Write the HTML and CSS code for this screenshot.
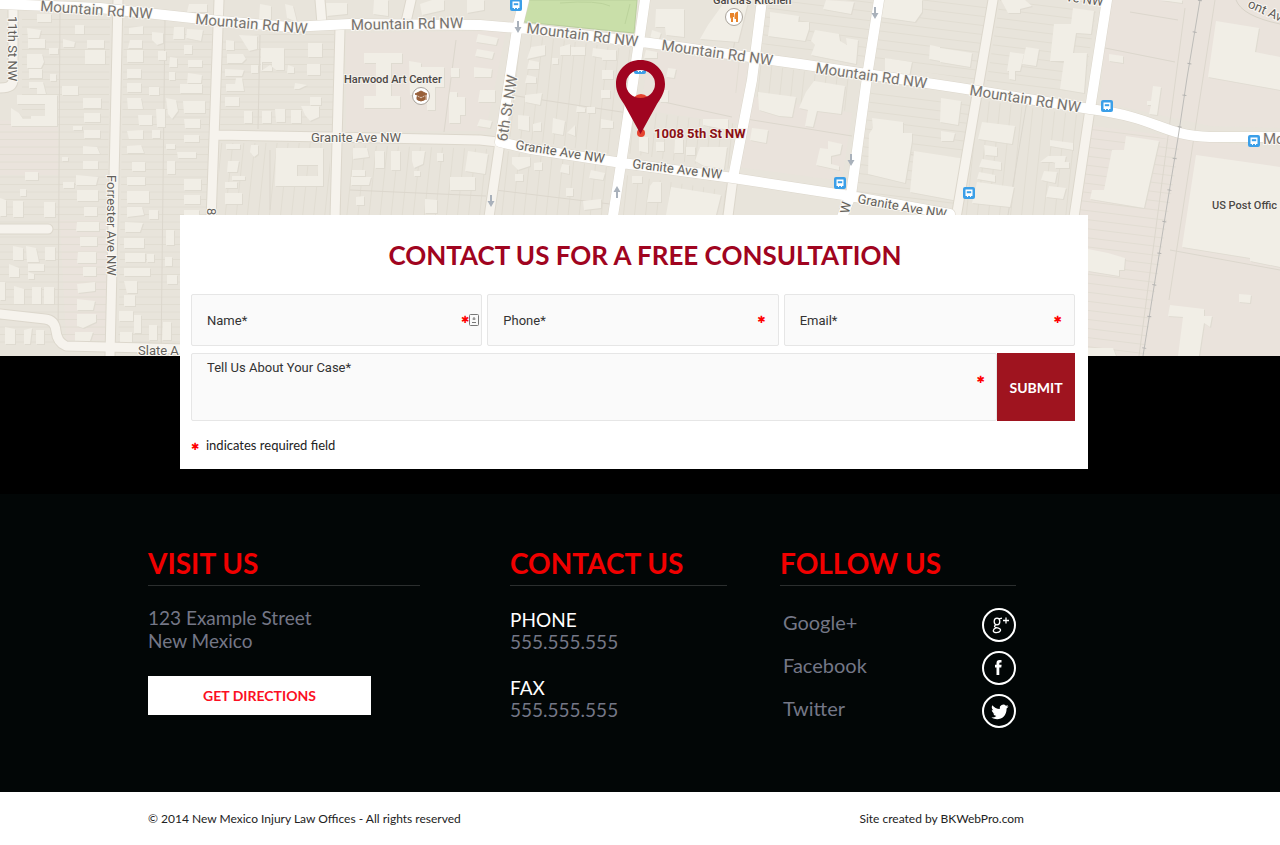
FILE: index.html
```html
<!DOCTYPE html>
<html lang="en">
<head>
<meta charset="utf-8">
<meta name="viewport" content="width=device-width, initial-scale=1">
<title>Contact - New Mexico Injury Law Offices</title>
<link rel="stylesheet" href="styles.css">
</head>
<body>
<section class="map" aria-label="Map of 1008 5th St NW">
<svg class="map-canvas" viewBox="0 0 1280 356" preserveAspectRatio="xMidYMin slice">
  <defs>
    <pattern id="rows" width="60" height="15" patternUnits="userSpaceOnUse"><path class="lot" d="M0 4.500H60M0 12H60"/></pattern>
    <pattern id="cols" width="11" height="60" patternUnits="userSpaceOnUse" patternTransform="rotate(6)"><path class="lot" d="M4.500 0V60"/></pattern>
    <pattern id="slant" width="60" height="9" patternUnits="userSpaceOnUse" patternTransform="rotate(7)"><path class="lot" d="M0 4.500H60"/></pattern>
    <g id="bus"><rect class="bus-box" x="-6" y="-6" width="12" height="12" rx="2"/><path class="bus-body" d="M-3.500-3.500h7v6.500h-1.500v1h-1v-1h-2v1h-1v-1h-1.500z"/><path class="bus-glass" d="M-2.200-1.800h4.400v2h-4.400z"/></g>
    <path id="arrow" class="arrow" d="M-1-6h2v6h2.500L0 6-3.500 0H-1z"/>
  </defs>
  <rect class="land" width="1280" height="356"/>
  <path class="tint" d="M346 33l160-2-20 100-140 0zM650 50l98 14-8 60-100-14zM740 95l112 18-10 68-105-14zM1108 0h172v128l-70-2-110-24zM1085 125l195 25v206H1070zM0 120l58 5v50H0zM60 220h48v120H66z"/>
  <path fill="url(#rows)" d="M22 18h88l-4 325H0V120h22zM124 22l88 8-8 326h-86zM222 36l112-4v98H220z"/>
  <path fill="url(#cols)" d="M518 34l116 16-14 106-114-20zM345 145l150 4-12 66H342zM220 143h110v72H217zM735 60l122 20-4 32-123-20zM630 110l108 14-8 45-105-16zM500 150l114 18-6 47H490zM980 100l104 16-16 99H964zM625 175l104 16-2 24H622z"/>
  <path fill="url(#slant)" d="M884 0h104l-12 80-104-16zM1000 0h98l-16 100-96-14zM872 85l104 16-18 112-104-18zM1085 120l95 22-36 214h-74zM770 0h104l-10 60-104-16z"/>
  <path class="parcel" d="M60 10l-2 335M165 18l-4 338M260 35l-2 94M456 40l-12 92M740 8l-8 50M632 95l100 22M510 95l118 18M740 118l112 18M350 190l136 6M495 190l115 14M1028 95l-20 120M1185 8l-46 348M1215 0l-46 300M1130 12l48 8M1105 48l70 14M270 150v60M1170 250l110 20M880 150l80 12"/>

  <path class="park" d="M528 0h109l-3 33-110-11z"/>
  <path class="park-line" d="M560 3q38-3 50 3M630 4l-5 20"/>

  <g class="buildings">
    <path d="M37 14h14v8H37zM27 28l14 2-2 8H28zM28 39h17v9H28zM27 54h15l2 8-3 6H27zM49 48h9v6h-9zM29 69h13v9H29zM50 74h6v7h-6zM29 82h14l3 12h-9v-6h-8zM17 95h40v31H11v-18l8 5 4 6h8v-3h14v-12H17z"/>
    <path d="M75 25h9v9h-9zM63 39l12 3-1 5H63zM87 40h17v8H87zM85 50h20v14H85zM62 86h16v9H62zM83 98h18v10H83zM84 113h16v9H84zM73 126h9v4h-9zM84 130h16v8H84zM83 146l14 1 3 7H83zM62 157h6v4h-6zM83 161h15v8H83zM76 175l22 2-2 8H76zM63 182h11v6H63zM77 190h21v11H77zM25 172h13v8H25z"/>
    <path d="M20 189h6v7h-6zM13 201h10v16H13zM44 202h11v15H44zM0 198l6 2v16H0zM84 207h13v9H84zM77 222h22v9H76zM80 237h17v9H80zM78 252h18v11H77zM83 267h13v9H83zM77 284l18-2v9l-17 2zM77 299l18 2-2 9H77zM77 314h19v8l-13 6-6-2zM75 332h18l-3 9H75z"/>
    <path d="M13 246l10 2v12H13zM26 246l10 2 3 14H27zM45 247h10v13H45zM28 264h16v7H28zM9 264l10 4v9H9zM0 282h5v18H0zM14 286l10 3v15H14zM32 287h9v17h-9zM44 287h10v17H44zM5 327l10 2v15H5zM24 330l8-2-2 16h-6zM36 330h8v14h-8zM28 272l6 2v5h-6z"/>
    <path d="M129 28l14-2v8h-14zM130 40h12v8h-14zM152 32l11 1v10l-6 2-5-5zM174 27h10v12h-11zM187 29l16 1-2 11-15-3zM127 50h16v12h-16zM158 51h8v9h-8zM184 45h8v9h-8zM170 57l7 1v9h-8zM188 60h14v7h-14zM127 69h14v9h-14zM188 73l14 2-1 8h-14zM169 72h6v8h-6zM127 83h14v9h-14zM149 87h10v8h-10zM180 84h22v9h-22zM127 98h14l2 11h-15zM166 98l10 2 2 11-6 8-4-5zM183 101h22v12h-21zM138 115h14v10h-13zM156 109h9v18h-8zM184 119h16v9h-15z"/>
    <path d="M127 131l16-1v9h-14zM152 130h8v8h-8zM184 135h15v7h-15zM127 146l14-1 3 8h-17zM177 152h19v6h-18zM166 144h9v5h-9zM132 162h13v9h-13zM167 161h8v13h-8zM127 177h18v8h-18zM184 179h17v11h-17zM127 191h22v12h-22zM184 195h16v9h-16zM184 210h15v8h-15zM127 207h15l2 8-17 2zM149 210h9v9h-9zM125 222l18 1-3 9h-15zM166 230h8v15h-8zM124 238h20v10h-20zM125 253h20v9h-20zM147 254h7v8h-7zM124 268h26v8h-26zM165 257h7v9h-7zM167 275h10v9h-10zM124 281h13v12h-10zM124 295h11v11h-11zM119 311h14v10h-14zM134 315h7v18h-7zM149 325h8v15h-8zM163 322h8v18h-9zM120 332h12v12h-12z"/>
    <path d="M189 4h18v8h-20zM260 4l11 2v13h-12zM285 4l8 2 4 16-10-4zM226 40l8 1v9h-8zM239 35l18 1v13l-8 2zM227 54h16l3 5-4 4h-15zM261 48h23v22h-8l-6-5-9 6zM251 65h7v8h-7zM225 69l19 1-2 6h-17zM236 78h6l2 13h-18v-7h9zM225 97h14v9h-14zM262 62h10v9h-10zM288 65l6 2v6h-7zM308 43h14v14h-14zM307 64h13v11h-13zM295 83l12 2-8 4h-5zM244 111h8v12h-8zM262 111h9v12h-9zM275 109h10v13h-9zM291 110h10v13h-10zM301 106h18v11l-9 4-5-6zM310 97h11v8h-11zM226 144h14v5h-14zM251 145h7v9l-4 3-4-5zM228 161h11l-2 11h-10zM225 182h12v6h-12zM225 193h17v11h-17zM232 176h13v4h-13zM276 148h47v38h-48zM297 165v11h21v-11z" fill-rule="evenodd"/>
    <path d="M364 53h38v10h-11v33h9v12h-36v-12h12V63h-12zM409 61l12 2v4h23v20h-9v23h-8v-15h-17zM478 34l20 4-2 7-20-3zM477 49l17 3-2 7-17-3zM474 67l18 2-1 8h-17zM480 90h15v12h-17zM450 92h7v5h8v18h-5v8h-11V98zM480 119l12 2-2 7-13-2zM451 68h8v9h-8zM353 148h14l2 9-16 2zM375 151h9v17h-9zM412 151h13l-2 13-9 4-2-7zM437 153h6v8h-6zM468 151l20 3-3 20-20-3zM352 170h13v6h-13zM351 177h20l-2 8h-18zM414 171h6v5h-6zM450 177h25v13h-25zM356 197l8-1v9h-8zM425 199l12 1v13h-12zM391 151h9v19h-9zM326 3h21v11l-20 2zM374 0h14v16l-15-2zM420 4l12-4h12v10l-22 5zM467 0h17v10l-17 3z"/>
    <path d="M531 47l14-2v10l-18 4zM529 60l10 2v7h-12zM527 75l9 2v6h-11zM525 95l17-2-2 12-15-3zM560 47l10-3v11h-10zM571 47h14v8h-14zM593 48l23 3-2 9-22-4zM552 58h6v6h-6zM577 106l8 2v4h-9zM587 107h8v6h-8zM518 115l11 1v15l-11-2zM533 124l8-2v9h-8zM553 118l12 3-2 14-11-2zM567 133l8-8v11zM512 157h18v9l-12 4-6-6zM534 163l8-1v8h-8zM515 174h8v7h-8zM562 164l7 1v9l-9-2zM591 170l14 3-2 7-14-2zM583 201l18-2v9l-17 2zM566 188h7v8h-7z"/>
    <path d="M656 9h28v28l-18-2-1-8h-10zM652 30l9 3-2 6h-9zM726 0l22 2-10 40-38-3 8-14zM646 50l11 2v6h-13zM668 68l8 1-2 9-8-1zM660 90h8v12h-8zM703 119h25v11l-25-5zM639 137h9v16l-9-2zM656 142h8v9h-8zM675 139h8v14h-9zM700 147h27l-3 22-20-3-9-5zM686 147h9v8h-9zM653 182h8v20h-14l3-16zM671 187l50 8-5 20h-50zM632 176h10v7h-10zM601 90h9v8h-9zM602 70h11v9h-11zM602 50h14v10h-14zM601 119l12 2v7h-12z"/>
    <path d="M770 12l29 4-1 8-28-2zM770 22h39v7l-4 12-37-5zM815 30l24 4 1 7 7 4-1-7 12 2-2 24-45-9 4-10-4-4zM826 0l28 2-3 12-28-5zM758 92l38 5-4 20-13-1-20-6zM814 81l31 5-4 28-24-3-4 16-8-1 3-16-9-2 7-16zM752 128l16 2-2 13-16-3zM820 148l8 1v-8l14 3-2 10-9 2v8l8 2v4l-23-5zM872 118l31 4v11h9v8l-7 42-37-9 1-40 4-6zM914 151l52 8-8 42-48-9zM885 58l27 4-3 15-24-4zM884 0h38v12l-7 10-35-5zM930 45l10 2v14l-11-2z"/>
    <path d="M940 48l32 5-2 14-30-5zM1001 0h24l7 6-12 3v4h-12zM1010 52l14 2-4 17h-5v9l-6-1v-8h-2zM1026 47l13 2-3 17-14-2zM1073 8l21 3-3 23-15-1-3 20h14l-3 40-24-4 4-28h-14l4-37h17zM1109 54l14 2v7l-14-2zM1153 86l8 1-4 28-8-1 2-9h-4v-4h4zM1216 21l43 7-4 24 25 5v33l-72-13zM1160 0h22v3zM941 98l20 3-3 24-18-3zM941 131l14 2-2 8h-12zM982 122l33 4-3 18-34-5zM984 145l13 2v9l-12-1zM982 159l19 3v8l-22-3zM979 172l16 3v7l-18-3zM1050 140l23 3v7l-23-4zM1048 156h18l-2 9-12-3h-12zM1044 171l13 1-2 11-14-3zM1049 186l17 2-3 11-17-2zM977 182l37 5-4 20-38-4zM1055 162h14v6h-14zM1126 136l33 5-15 67-54-9 2-9h12l8-40h12zM1196 155l84 12v100l-30-6v-3l-68-11zM1088 249l20 4 17 5-1 12h-5v6l-31-5zM1170 305l34 4v7h8l-2 11-6-4-5 33h-21l5-39-15-1zM1239 294l12 1-1 8-11-1zM1085 348h28l3 8h-31z"/>
  </g>

  <path class="road-edge" d="M118 0L110 356M219 0l-8 220M340 28l-5 190M320 0l2 24M411 0l-5 22M217 135l113 2 150 3 18 2M500 142l-11 75M733 178l-5 38M993 0l-37 218M1090 109l-16 108M13 8v72q0 8-13 8M0 229h48M0 314l45 5q10 1 11 12t10 15l120 3"/>
  <path class="road-minor" d="M118 0L110 356M219 0l-8 220M340 28l-5 190M320 0l2 24M411 0l-5 22M217 135l113 2 150 3 18 2M500 142l-11 75M733 178l-5 38M993 0l-37 218M1090 109l-16 108M13 8v72q0 8-13 8M0 229h48M0 314l45 5q10 1 11 12t10 15l120 3"/>
  <path class="road-edge" d="M0 4L100 8 220 21 290 27 350 24 480 25 530 29 650 43 800 64 960 88 1090 109C1160 118 1160 135 1210 137H1280M524 0l-7 29-17 113 31 7 91 14 111 15 117 18 100 18M645 0l-6 42-18 122-8 52M762 0l-10 80-19 98M879 0l-11 70-17 125-9 22M1107 0l-17 109"/>
  <path class="road-major" d="M0 4L100 8 220 21 290 27 350 24 480 25 530 29 650 43 800 64 960 88 1090 109C1160 118 1160 135 1210 137H1280M524 0l-7 29-17 113 31 7 91 14 111 15 117 18 100 18M645 0l-6 42-18 122-8 52M762 0l-10 80-19 98M879 0l-11 70-17 125-9 22M1107 0l-17 109"/>
  <path class="rail" d="M1200 0l-13 78-9 60-11 67-24 151"/>
  <path class="rail-ties" d="M1200 0l-13 78-9 60-11 67-24 151"/>
  <path class="curve-street" d="M1236 0q6 16 44 24"/>

  <use href="#arrow" x="518" y="27"/><use href="#arrow" x="491" y="201"/><use href="#arrow" x="875" y="13"/><use href="#arrow" x="851" y="160"/>
  <use href="#arrow" transform="translate(617 192) rotate(180)"/>
  <use href="#bus" x="516" y="5"/><use href="#bus" x="640" y="68"/><use href="#bus" x="840" y="183"/><use href="#bus" x="969" y="193"/><use href="#bus" x="1107" y="106"/><use href="#bus" x="1254" y="141"/>

  <g class="street street-large">
    <text transform="translate(40 11) rotate(4)">Mountain Rd NW</text>
    <text transform="translate(195 24) rotate(5)">Mountain Rd NW</text>
    <text transform="translate(351 30) rotate(-1)">Mountain Rd NW</text>
    <text transform="translate(526 33) rotate(7)">Mountain Rd NW</text>
    <text transform="translate(661 50) rotate(8)">Mountain Rd NW</text>
    <text transform="translate(815 73) rotate(8)">Mountain Rd NW</text>
    <text transform="translate(969 95) rotate(9)">Mountain Rd NW</text>
    <text x="1263" y="144">Mo</text>
    <text transform="translate(507 142) rotate(-81)">6th St NW</text>
  </g>
  <g class="street">
    <text x="311" y="142">Granite Ave NW</text>
    <text transform="translate(515 149) rotate(9)">Granite Ave NW</text>
    <text transform="translate(632 168) rotate(7)">Granite Ave NW</text>
    <text transform="translate(857 203) rotate(10)">Granite Ave NW</text>
    <text transform="translate(8 16) rotate(90)">11th St NW</text>
    <text transform="translate(107 175) rotate(90)">Forrester Ave NW</text>
    <text transform="translate(207 208) rotate(90)">8</text>
    <text transform="translate(849 214) rotate(-80)">W</text>
    <text transform="translate(1066 1) rotate(8)">ve NW</text>
    <text transform="translate(1247 7) rotate(24)">ont Ave</text>
    <text x="138" y="355">Slate A</text>
  </g>
  <g class="place">
    <text x="344" y="83">Harwood Art Center</text>
    <text x="713" y="4">Garcia's Kitchen</text>
    <text x="1212" y="209">US Post Offic</text>
  </g>
  <circle class="poi" cx="421" cy="96" r="8.500"/>
  <path class="school" d="M415 94l6-3 6 3-6 3zM417 96.500l4 2 4-2v3q-4 3-8 0zM426 95v5"/>
  <circle class="poi" cx="734" cy="17" r="8.500"/>
  <path class="food" d="M731 13v3.500q0 1.500 1 1.500v4M733 13v4M737 22v-9q-2 1-1.500 5H737"/>

  <circle class="spot" cx="641" cy="103" r="9"/>
  <circle class="spot" cx="641" cy="133" r="4"/>
  <path class="pin" fill-rule="evenodd" d="M640.500 60c-14 0-24.500 10.500-24.500 24 0 8 4 14 8 20l16.500 30L657 104c4-6 8-12 8-20 0-13.500-10.500-24-24.500-24zm0 10a14.500 14 0 1 1 0 28 14.500 14 0 0 1 0-28z"/>
  <text class="address-label" x="654" y="138">1008 5th St NW</text>
</svg>
</section>

<main class="contact">
  <form class="card">
    <h1 class="card-title">CONTACT US FOR A FREE CONSULTATION</h1>
    <div class="fields">
      <div class="field"><input class="control" type="text" placeholder="Name*" aria-label="Name" required><span class="marker marker-card">✱<svg class="contact-card" viewBox="0 0 10 12" aria-hidden="true"><rect x=".5" y=".5" width="9" height="11" rx="1"/><path d="M5 3v3M3.500 5h3M3 8.500h4"/></svg></span></div>
      <div class="field"><input class="control" type="tel" placeholder="Phone*" aria-label="Phone" required><span class="marker">✱</span></div>
      <div class="field"><input class="control" type="email" placeholder="Email*" aria-label="Email" required><span class="marker">✱</span></div>
    </div>
    <div class="message">
      <div class="field message-field"><textarea class="control control-area" placeholder="Tell Us About Your Case*" aria-label="Tell us about your case" required></textarea><span class="marker marker-area">✱</span></div>
      <button class="submit" type="submit">SUBMIT</button>
    </div>
    <p class="required-note"><span class="note-star">✱</span>indicates required field</p>
  </form>
</main>

<footer class="footer">
  <div class="footer-columns">
    <section class="column column-visit">
      <h2 class="column-title">VISIT US</h2>
      <p class="address">123 Example Street<br>New Mexico</p>
      <a class="directions" href="#">GET DIRECTIONS</a>
    </section>
    <section class="column column-contact">
      <h2 class="column-title">CONTACT US</h2>
      <dl class="numbers">
        <div class="number"><dt>PHONE</dt><dd>555.555.555</dd></div>
        <div class="number"><dt>FAX</dt><dd>555.555.555</dd></div>
      </dl>
    </section>
    <section class="column">
      <h2 class="column-title">FOLLOW US</h2>
      <div class="social">
        <a class="social-link" href="#">Google+<svg class="social-icon" viewBox="0 0 34 34" aria-hidden="true"><circle class="ring" cx="17" cy="17" r="16"/><g class="thin"><ellipse cx="15" cy="13.500" rx="2.800" ry="3.300"/><path d="M17 10.800l3-.6M14 16.800q-2.800 1.500-.5 2.500l3 .8q2.800 1 1.800 2.800-1 1.800-3.800 1.800t-3.300-1.800q0-1.900 3-3.300M24 9.500v6M21 12.500h6"/></g></svg></a>
        <a class="social-link" href="#">Facebook<svg class="social-icon" viewBox="0 0 34 34" aria-hidden="true"><circle class="ring" cx="17" cy="17" r="16"/><path class="solid" d="M14.500 24v-7.500H13v-2.700h1.500V12q0-3 3-3h2v2.600h-1.200q-1 0-1 1v1.200h2.300l-.3 2.700h-2V24z"/></svg></a>
        <a class="social-link" href="#">Twitter<svg class="social-icon" viewBox="0 0 34 34" aria-hidden="true"><circle class="ring" cx="17" cy="17" r="16"/><path class="solid" d="M26.500 12.200q-.8.400-1.900.5 1-.6 1.400-1.800-.9.600-2.100.8a3.700 3.700 0 0 0-6.200 3.300q-4.500-.3-7.400-3.800-1.500 3 1.100 5-.8 0-1.600-.5 0 2.800 2.900 3.700-.8.200-1.600.1.800 2.200 3.300 2.500-2 1.600-5 1.500c7 4.200 15.300.2 15.200-9.100q1.200-.9 1.900-2.200z"/></svg></a>
      </div>
    </section>
  </div>
</footer>
<div class="legal">
  <p>© 2014 New Mexico Injury Law Offices - All rights reserved</p>
  <p>Site created by <a class="credit" href="#">BKWebPro.com</a></p>
</div>
</body>
</html>
```
FILE: styles.css
```css
* { box-sizing: border-box; }
body { margin: 0; background: #fff; color: #222; font-family: Lato, "Open Sans", sans-serif; }
h1, h2, p, dl, dd { margin: 0; }
a { color: inherit; text-decoration: none; }

/* Map */
.map { background: #e8e4db; }
.map-canvas { display: block; width: 100%; height: 356px; font-family: Roboto, sans-serif; }
.land { fill: #e8e4db; }
.tint { fill: #eae3dc; }
.lot { stroke: #dfdacf; stroke-width: 1; opacity: .7; }
.parcel { fill: none; stroke: #dcd7cd; stroke-width: 1; }
.park { fill: #c9dfa9; stroke: #b9cf9c; }
.park-line { fill: none; stroke: #bcd39c; }
.buildings { fill: #f1eee6; filter: drop-shadow(1px 1px 0 #dfdbd1); }
.road-edge, .road-minor, .road-major { fill: none; stroke-linejoin: round; stroke-linecap: round; }
.road-edge { stroke: #dcd7cc; stroke-width: 11; }
.road-minor { stroke: #f6f3ed; stroke-width: 9; }
.road-major { stroke: #fff; stroke-width: 10; }
.curve-street { fill: none; stroke: #d8d3c8; }
.rail { fill: none; stroke: #bdbcb9; stroke-width: 1; }
.rail-ties { fill: none; stroke: #b4b3b1; stroke-width: 4; stroke-dasharray: 1 31; }
.arrow { fill: #a9b1bb; }
.bus-box { fill: #3b9fe8; }
.bus-body { fill: #fff; }
.bus-glass { fill: #3b9fe8; }
.street { fill: #635f5a; font-size: 13px; stroke: #faf8f4; stroke-width: 2; paint-order: stroke; }
.street-large { font-size: 15px; fill: #77736e; }
.place { fill: #4c4845; font-size: 11px; font-weight: 500; stroke: #f4f1eb; stroke-width: 2; paint-order: stroke; }
.poi { fill: #fff; stroke: #a9a39a; }
.school { fill: #98603a; stroke: #98603a; stroke-width: 1; }
.food { fill: none; stroke: #e8842b; stroke-width: 2; }
.spot { fill: #e5432f; }
.pin { fill: #a00420; }
.address-label { fill: #8a0f14; font-size: 13px; font-weight: 700; stroke: #f4f1eb; stroke-width: 2; paint-order: stroke; }

/* Consultation form */
.contact { display: flow-root; background: #000; padding: 0 12px 25px 0; }
.card { position: relative; max-width: 908px; margin: -141px auto 0; padding: 24px 13px 15px 11px; background: #fff; }
.card-title { padding-left: 24px; text-align: center; color: #a00420; font-size: 26px; line-height: 32px; font-weight: 700; }
.fields { display: grid; grid-template-columns: repeat(3, 1fr); gap: 5px; margin-top: 23px; }
.field { position: relative; }
.control { display: block; width: 100%; height: 52px; padding: 0 15px; border: 1px solid #e6e6e6; border-radius: 2px; background: #fafafa; color: #333; font-family: Roboto, "Liberation Sans", sans-serif; font-size: 13px; }
.control::placeholder { color: #333; opacity: 1; }
.control-area { height: 68px; padding: 5px 15px; line-height: 18px; resize: none; }
.marker { position: absolute; top: 20px; right: 13px; display: flex; align-items: center; color: #f00; font: 10px/12px "DejaVu Sans", sans-serif; }
.marker-card { right: 3px; }
.marker-area { right: 12px; top: 21px; }
.contact-card { width: 10px; height: 12px; fill: none; stroke: #777; }
.message { display: flex; margin-top: 7px; }
.message-field { flex: 1; }
.submit { width: 78px; border: 0; padding: 0; background: #9f141f; color: #fff; font-family: inherit; font-size: 14px; font-weight: 700; }
.required-note { margin-top: 15px; font-size: 13px; line-height: 18px; color: #222; }
.note-star { display: inline-block; width: 15px; color: #f00; font: 10px/12px "DejaVu Sans", sans-serif; }

/* Footer */
.footer { padding: 52px 24px 64px 148px; background: #020606; color: #747786; font-size: 19px; line-height: 23px; }
.footer-columns { display: grid; grid-template-columns: 362fr 270fr 236fr; max-width: 868px; }
.column-visit { padding-right: 90px; }
.column-contact { padding-right: 53px; }
.column-title { padding-bottom: 5px; border-bottom: 1px solid #2b2e2e; color: #f10000; font-size: 28px; line-height: 34px; font-weight: 700; }
.address { margin-top: 20px; }
.directions { display: block; max-width: 223px; margin-top: 24px; background: #fff; color: #fb0f22; text-align: center; font-size: 14px; line-height: 39px; font-weight: 700; }
.numbers { margin-top: 23px; }
.number { line-height: 22px; }
.number + .number { margin-top: 24px; }
.numbers dt { color: #fff; }
.social { display: grid; gap: 9px; margin-top: 22px; }
.social-link { display: flex; align-items: flex-start; justify-content: space-between; padding-left: 3px; font-size: 20px; line-height: 28px; }
.social-icon { width: 34px; height: 34px; }
.ring { fill: none; stroke: #fff; stroke-width: 2; }
.thin { fill: none; stroke: #fff; stroke-width: 1.3; }
.solid { fill: #fff; }

.legal { display: flex; flex-wrap: wrap; justify-content: space-between; gap: 8px; max-width: 1024px; padding: 18px 0 18px 148px; font-size: 12px; line-height: 18px; }
```
